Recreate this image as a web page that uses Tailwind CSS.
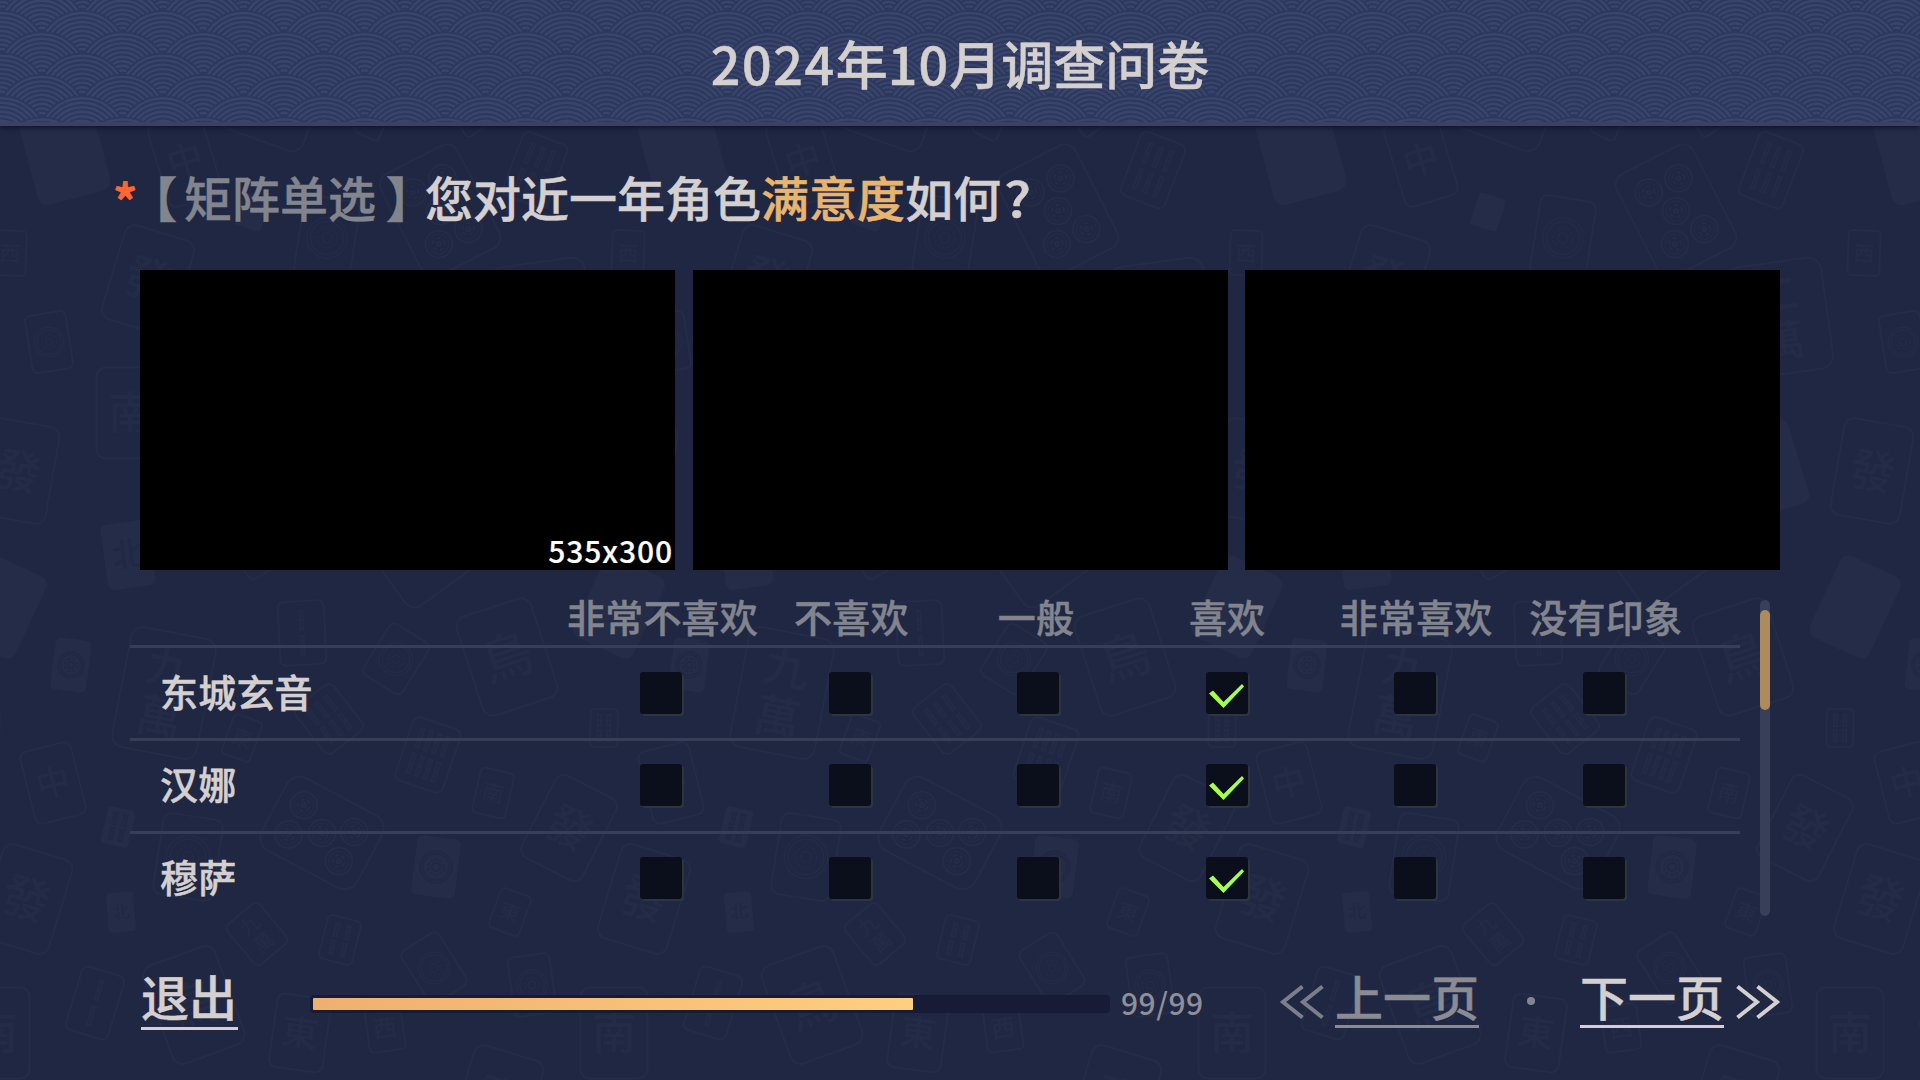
<!DOCTYPE html>
<html lang="zh-CN">
<head>
<meta charset="utf-8">
<title>2024年10月调查问卷</title>
<script src="https://cdn.jsdelivr.net/npm/@tailwindcss/browser@4"></script>
</head>
<body class="relative w-[1920px] h-[1080px] overflow-hidden bg-[#202743] font-['Noto_Sans_CJK_SC',sans-serif] font-medium text-[#d5d0d0]">

<!-- mahjong tile backdrop, repeats every 618px -->
<svg aria-hidden="true" class="absolute inset-0 w-[1920px] h-[1080px]" viewBox="0 0 1920 1080">
  <defs><g id="tiles" fill="none" stroke="#252c47" stroke-width="2"></g></defs>
  <use href="#tiles" x="-618"/><use href="#tiles"/><use href="#tiles" x="618"/><use href="#tiles" x="1236"/><use href="#tiles" x="1854"/>
</svg>

<div class="relative flex flex-col h-full [-webkit-text-stroke:0.5px_currentColor]">
  <header class="relative h-[126px] shrink-0 flex items-center justify-center bg-[#2f3a60] border-b-4 border-[#3b4160] shadow-[0_2px_5px_rgba(8,10,22,0.65)]">
    <svg aria-hidden="true" class="absolute inset-0 w-full h-full" width="1920" height="122">
      <defs>
        <g id="scale" fill="none" stroke="#39456c" stroke-width="2.400">
          <circle r="46" fill="#2e385d" stroke="none"/>
          <circle r="43"/><circle r="38.500"/><circle r="34"/><circle r="29.500"/><circle r="25"/><circle r="20.500"/><circle r="16"/><circle r="11.500"/><circle r="7"/>
        </g>
      </defs>
      <g id="waves"></g>
    </svg>
    <h1 class="relative flex items-center h-[122px] text-[52px] leading-none whitespace-nowrap pt-[4px]"><span class="tracking-[1.6px]">2024</span>年<span class="tracking-[1.2px]">10</span>月调查问卷</h1>
  </header>

  <main class="flex flex-col flex-1">
    <h2 class="flex h-[144px] pt-[40px] pl-[112px] text-[48px] leading-[60px] whitespace-nowrap">
      <span class="w-[24px] pt-[3px] pl-px font-bold text-[#ff6633]">*</span>
      <span class="flex w-[289px] text-[#82858e]"><span class="w-[31px] ml-[17px] font-black [font-feature-settings:'halt']">【</span>矩阵单选<span class="ml-[10px] font-black [font-feature-settings:'halt']">】</span></span>
      <span>您对近一年角色<span class="text-[#e8b571]">满意度</span>如何<span class="inline-block ml-[3px] scale-x-115 origin-left">?</span></span>
    </h2>

    <section class="flex justify-between h-[300px] px-[140px]">
      <div class="flex items-end justify-end w-[535px] h-[300px] bg-black pr-[2px] pb-0.5 text-[30px] leading-[36px] tracking-[0.9px] text-white [-webkit-text-stroke:0.2px_white]">535x300</div>
      <div class="w-[535px] h-[300px] bg-black"></div>
      <div class="w-[535px] h-[300px] bg-black"></div>
    </section>

    <section class="flex pl-[130px] pt-[30px] h-[354px]">
      <div class="w-[1610px] text-[38px] leading-[44px] tracking-[0.2px]">
        <div class="flex h-[48px] pl-[437px] border-b-[3px] border-[#373e57] text-[#82858e] text-center whitespace-nowrap">
          <div class="w-[188.6px] -mt-1.5">非常不喜欢</div><div class="w-[188.6px] -mt-1.5 pl-[3px]">不喜欢</div><div class="w-[188.6px] -mt-1.5 pr-[5px]">一般</div><div class="w-[188.6px] -mt-1.5">喜欢</div><div class="w-[188.6px] -mt-1.5 pl-px">非常喜欢</div><div class="w-[188.6px] -mt-1.5 pl-[3px]">没有印象</div>
        </div>
        <div id="rows"></div>
      </div>
      <div class="ml-[20px] w-[10px] h-[316px] rounded-full bg-[#383f58] pt-[10px]">
        <div class="h-[100px] rounded-full bg-[#ad8b5c]"></div>
      </div>
    </section>

    <footer class="flex pl-[141px] pt-[44px] text-[48px] leading-[55px] whitespace-nowrap">
      <button class="flex items-start w-[97px] h-[62px] border-b-[3px] border-[#d5d0d0]">退出</button>
      <div class="ml-[72px] mt-[27px] w-[800px] h-[18px] rounded-[4px] bg-[#171b36] p-[3px]">
        <div class="w-[600px] h-[12px] rounded-[1px] bg-linear-to-r from-[#eeb06e] to-[#ffcf80]"></div>
      </div>
      <div class="ml-[11px] mt-[14px] w-[158px] text-[30px] leading-[40px] tracking-[0.5px] text-[#8f8f98] [-webkit-text-stroke:0]">99/99</div>
      <svg class="w-[46px] h-[36px] mt-[16px]" viewBox="0 0 46 36" fill="none" stroke="#7c7e8b" stroke-width="4"><path d="M23.500 2.500L4 18L23.500 33.500M43.500 2.500L24 18L43.500 33.500"/></svg>
      <button class="flex items-start ml-[10px] w-[144px] h-[60px] border-b-[3px] border-[#8b8b93] text-[#8b8b93]">上一页</button>
      <span class="ml-[48px] mt-[29px] size-[8px] rounded-full bg-[#82868f]"></span>
      <button class="flex items-start ml-[45px] w-[144px] h-[60px] border-b-[3px] border-[#d5d0d0]">下一页</button>
      <svg class="ml-[11px] w-[46px] h-[36px] mt-[16px]" viewBox="0 0 46 36" fill="none" stroke="#d5d0d0" stroke-width="4"><path d="M2.500 2.500L22 18L2.500 33.500M22.500 2.500L42 18L22.500 33.500"/></svg>
    </footer>
  </main>
</div>

<template id="row">
  <div class="flex items-center h-[93px] pb-[2px] first:pb-0 border-b-[3px] border-[#373e57] last:border-transparent">
    <div class="name w-[437px] pl-[30px] pb-[4px]"></div>
    <div class="w-[188.6px] flex justify-center"><i class="size-[42px] rounded-[3px] bg-[#0b0f1b] shadow-[2px_2px_0_#30343f]"></i></div>
    <div class="w-[188.6px] flex justify-center"><i class="size-[42px] rounded-[3px] bg-[#0b0f1b] shadow-[2px_2px_0_#30343f]"></i></div>
    <div class="w-[188.6px] flex justify-center"><i class="size-[42px] rounded-[3px] bg-[#0b0f1b] shadow-[2px_2px_0_#30343f]"></i></div>
    <div class="w-[188.6px] flex justify-center"><i class="size-[42px] rounded-[3px] bg-[#0b0f1b] shadow-[2px_2px_0_#30343f]"><svg class="size-[42px]" viewBox="0 0 42 42" fill="#a6ff4d"><path d="M3 21.500L7 18.500L17.500 30L36 12L38 14.500L17.500 36Z"/></svg></i></div>
    <div class="w-[188.6px] flex justify-center pr-px"><i class="size-[42px] rounded-[3px] bg-[#0b0f1b] shadow-[2px_2px_0_#30343f]"></i></div>
    <div class="w-[188.6px] flex justify-center"><i class="size-[42px] rounded-[3px] bg-[#0b0f1b] shadow-[2px_2px_0_#30343f]"></i></div>
  </div>
</template>

<script>
// table rows
for (const name of ['东城玄音', '汉娜', '穆萨']) {
  const row = document.getElementById('row').content.cloneNode(true);
  row.querySelector('.name').textContent = name;
  document.getElementById('rows').append(row);
}

// header wave scales, upper rows first so lower ones overlap them
let waves = '';
for (let k = -3; k < 7; k++)
  for (let i = -1; i < 25; i++)
    waves += `<use href="#scale" x="${(1.6 + i * 80.65 + (k % 2 ? 40.3 : 0)).toFixed(1)}" y="${(56 + k * 21.3).toFixed(1)}"/>`;
document.getElementById('waves').innerHTML = waves;

// tiles: x, y, width, height, rotation, face, filled
const tiles = [
  [63,147,75,105,-15,'',1],[185,160,55,85,-17,'中'],[275,90,90,105,20,''],
  [440,211,86,115,-27,[[-16,-29],[17,-28],[0,0],[-16,29],[17,29]]],[535,170,47,68,21,6],
  [10,253,32,45,2,'西'],[49,342,41,58,-9,'o'],[544,318,95,112,-8,'二萬'],[18,471,70,98,10,'發'],
  [533,468,62,88,-17,'',1],[1,607,66,90,25,'',1],[148,280,72,98,17,'發'],[130,413,67,91,0,'南'],
  [128,555,48,66,-8,'北',1],[412,544,80,110,-36,''],[255,550,38,50,-30,''],[302,633,46,64,-3,2],
  [396,659,46,60,32,'o'],[507,657,78,104,-18,'鳥'],[164,693,86,122,11,'九萬'],[242,738,30,42,20,'東'],
  [329,719,48,58,-38,6],[428,755,50,67,19,8],[493,793,34,46,13,'南'],[71,665,36,52,7,'o',1],
  [322,833,108,82,28,[[-29,-16],[-29,17],[0,0],[28,-16],[28,17]]],[569,828,68,92,27,'發'],
  [53,783,52,74,-14,'中'],[604,728,27,38,1,4],[188,857,60,82,9,'o'],[118,827,28,38,13,4,1],
  [436,867,44,60,7,'o',1],[26,899,72,98,17,'發'],[121,912,27,40,-5,'北',1],[510,912,32,42,20,'東'],
  [257,934,42,52,-40,'九萬'],[340,940,34,45,14,4],[194,1005,76,104,-20,'鳥'],[434,968,44,62,-32,'o'],
  [300,1033,54,74,8,'東'],[385,1028,36,46,-8,'西'],[532,985,42,60,-8,'o'],[497,1100,72,98,17,'發'],
  [614,1033,67,91,0,'南'],[95,1003,44,66,17,2],[373,120,26,36,25,''],[327,238,56,80,9,'o'],
  [252,212,28,34,18,'',1],[470,115,30,36,-35,'']
];
document.getElementById('tiles').innerHTML = tiles.map(([x, y, w, h, r, face, filled]) => {
  const ink = filled ? '#212843' : '#242b46';
  let art = '';
  if (face === 'o') {
    const q = Math.min(w, h) * .36;
    art = [1, .82, .5, .25].map(f => `<circle r="${(q * f).toFixed(1)}" stroke="${ink}" stroke-dasharray="${f === .5 ? '3 2' : 'none'}" stroke-width="1.500"/>`).join('');
  } else if (Array.isArray(face)) {
    art = face.map(([a, b]) => `<g transform="translate(${a} ${b})"><circle r="13.500"/><circle r="10" stroke-width="1"/><circle r="6" stroke-dasharray="4 3"/><circle r="2"/></g>`).join('');
  } else if (typeof face === 'number') {
    const cols = face === 2 ? 1 : face === 4 ? 2 : face / 2;
    for (let c = 0; c < cols; c++) for (let k = 0; k < 2; k++) {
      const px = (c - (cols - 1) / 2) * w * .7 / cols, py = (k - .5) * h * .4, s = h * .15;
      art += `<path transform="translate(${px.toFixed(1)} ${py.toFixed(1)})" stroke="${ink}" d="M-3 ${-s}H3M-3 ${s}H3M-1.500 ${-s}V${s}M1.500 ${-s}V${s}M-3 0H3"/>`;
    }
  } else if (face) {
    const s = face.length > 1 ? h * .38 : Math.min(w * .66, h * .6);
    art = [...face].map((ch, n) => `<text text-anchor="middle" font-size="${s.toFixed(0)}" font-weight="500" fill="${ink}" stroke="none" y="${(s * .36 + (n - (face.length - 1) / 2) * s * 1.1).toFixed(0)}">${ch}</text>`).join('');
  }
  return `<g transform="translate(${x} ${y}) rotate(${r})"><rect x="${-w / 2}" y="${-h / 2}" width="${w}" height="${h}" rx="${(w * .14).toFixed(1)}" ${filled ? 'fill="#242c48" stroke="none"' : ''}/>${art}</g>`;
}).join('');
</script>
</body>
</html>
